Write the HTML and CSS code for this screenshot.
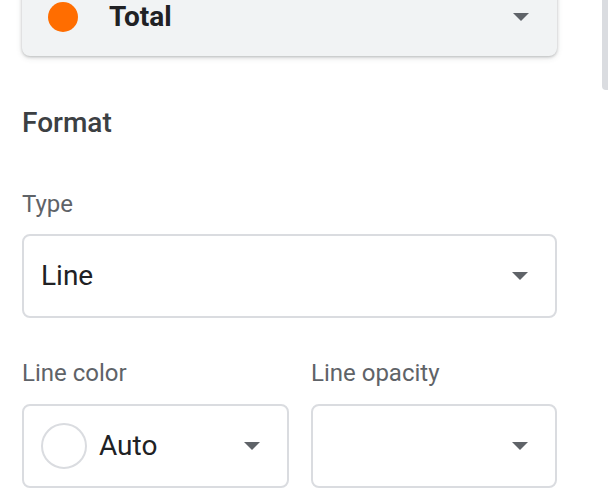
FILE: index.html
```html
<!DOCTYPE html>
<html lang="en">
<head>
    <meta charset="UTF-8">
    <meta name="viewport" content="width=device-width, initial-scale=1.0">
    <title>Series format</title>
    <link rel="stylesheet" href="styles.css">
</head>
<body>
    <div class="scrollbar"></div>
    <div class="panel">
        <div class="series">
            <span class="dot"></span>
            <span class="series-name">Total</span>
            <svg class="caret" width="16" height="8" viewBox="0 0 16 8"><path d="M0 0h16L8 8z"/></svg>
        </div>

        <h2>Format</h2>

        <div class="label type-label">Type</div>
        <div class="select">
            <span class="value">Line</span>
            <svg class="caret" width="16" height="8" viewBox="0 0 16 8"><path d="M0 0h16L8 8z"/></svg>
        </div>

        <div class="row">
            <div class="field">
                <div class="label">Line color</div>
                <div class="select">
                    <span class="swatch"></span>
                    <span class="value">Auto</span>
                    <svg class="caret" width="16" height="8" viewBox="0 0 16 8"><path d="M0 0h16L8 8z"/></svg>
                </div>
            </div>
            <div class="field">
                <div class="label">Line opacity</div>
                <div class="select">
                    <span class="value"></span>
                    <svg class="caret" width="16" height="8" viewBox="0 0 16 8"><path d="M0 0h16L8 8z"/></svg>
                </div>
            </div>
        </div>
    </div>
</body>
</html>
```

FILE: styles.css
```css
html, body {
    margin: 0;
    padding: 0;
    background: #fff;
    overflow: hidden;
}

body {
    font-family: Roboto, "Liberation Sans", Arial, sans-serif;
    color: #202124;
}

.scrollbar {
    position: absolute;
    top: 0;
    right: 0;
    width: 6px;
    height: 90px;
    background: #dadce0;
    border-radius: 0 0 0 4px;
}

.panel {
    padding: 0 51px 0 22px;
}

.series {
    display: flex;
    align-items: center;
    height: 82px;
    margin-top: -26px;
    padding: 4px 28px 0 26px;
    background: #f1f3f4;
    border-radius: 8px;
    box-shadow: 0 1px 3px rgba(60, 64, 67, 0.3), 0 2px 6px rgba(60, 64, 67, 0.12);
    box-sizing: border-box;
}

.dot {
    width: 30px;
    height: 30px;
    border-radius: 50%;
    background: #ff6d00;
}

.series-name {
    flex: 1;
    margin-left: 31px;
    font-size: 28px;
    font-weight: 700;
    line-height: 34px;
}

h2 {
    margin: 50px 0 0;
    font-size: 28px;
    font-weight: 500;
    line-height: 34px;
    color: #3c4043;
}

.label {
    font-size: 24px;
    line-height: 28px;
    color: #5f6368;
    margin-bottom: 17px;
}

.type-label {
    margin-top: 50px;
    margin-bottom: 16px;
}

.select {
    display: flex;
    align-items: center;
    height: 84px;
    padding: 0 27px 0 17px;
    border: 2px solid #dadce0;
    border-radius: 8px;
    box-sizing: border-box;
}

.value {
    flex: 1;
    font-size: 28px;
    line-height: 34px;
}

.caret {
    fill: #5f6368;
    flex-shrink: 0;
}

.row {
    display: grid;
    grid-template-columns: 267px 1fr;
    column-gap: 22px;
    margin-top: 41px;
}

.swatch {
    width: 46px;
    height: 46px;
    border: 2px solid #dadce0;
    border-radius: 50%;
    box-sizing: border-box;
    margin-right: 12px;
}
```
